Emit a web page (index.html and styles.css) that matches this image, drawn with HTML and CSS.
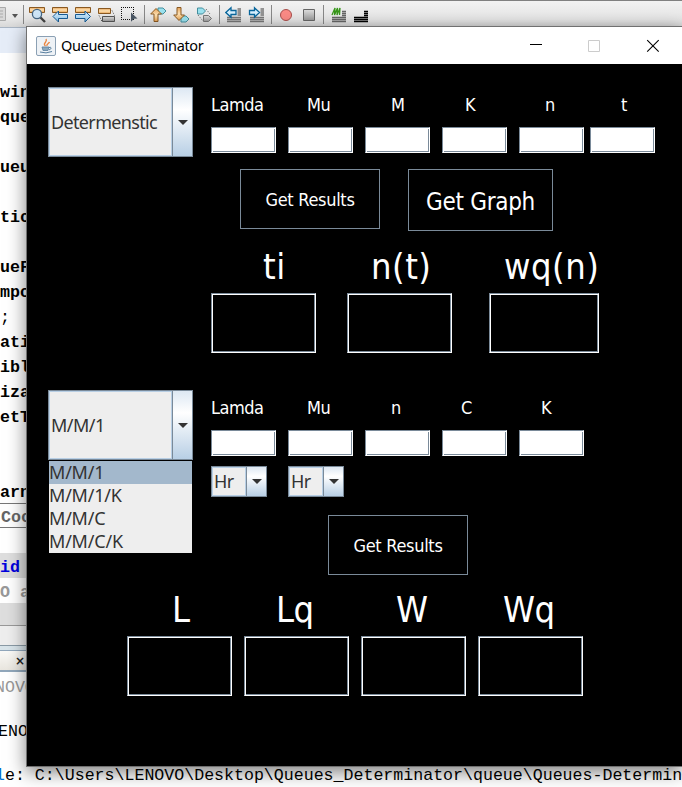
FILE: index.html
```html
<!DOCTYPE html>
<html lang="en">
<head>
<meta charset="utf-8">
<title>Queues Determinator</title>
<link rel="stylesheet" href="styles.css">
</head>
<body>
<svg class="defs" width="0" height="0">
  <defs>
    <linearGradient id="or" x2="0" y2="1"><stop offset="0" stop-color="#e5a45c"/><stop offset=".5" stop-color="#ffe3b5"/><stop offset="1" stop-color="#e8a250"/></linearGradient>
    <linearGradient id="bl" x2="0" y2="1"><stop offset="0" stop-color="#e5f5ff"/><stop offset="1" stop-color="#88c5ef"/></linearGradient>
    <linearGradient id="gr" x2="0" y2="1"><stop offset="0" stop-color="#dedede"/><stop offset="1" stop-color="#999"/></linearGradient>
    <g id="lines"><path d="M12.500 3h3.500M12.500 5h3.500M12.500 7h3.500M12.500 9h3.500M2 11.500h14M2 13.500h14M2 15.500h14" stroke="#777" stroke-width="1.300"/></g>
  </defs>
</svg>
<div class="ide">
  <div class="toolbar">
    <svg class="frag" width="6" height="17"><path d="M-1 1.5h6.5v13H-1" fill="#d8d8d8" stroke="#aaa"/><path d="M0 5h3M0 8h3M0 11h3" stroke="#aaa"/></svg>
    <svg class="caret" width="6" height="4"><path d="M0 0h6L3 4z" fill="#555"/></svg>
    <i class="sep"></i>
    <svg width="17" height="17"><path d="M.5 1.5h15v5H.5z" fill="url(#or)" stroke="#8b5a22"/><path d="M11 11l5 5" stroke="#444" stroke-width="2.4"/><circle cx="8" cy="8" r="4.6" fill="#cfe6f7" stroke="#456785" stroke-width="1.3"/></svg>
    <svg width="17" height="17"><path d="M.5 1.5h15v5H.5z" fill="url(#or)" stroke="#8b5a22"/><path d="M1 10.500l5.500-5.500V8.500H15.500v4H6.500V16z" fill="url(#bl)" stroke="#175d97"/></svg>
    <svg width="17" height="17"><path d="M.5 1.5h15v5H.5z" fill="url(#or)" stroke="#8b5a22"/><path d="M15.500 10.500L10 5v3.500H.5v4H10V16z" fill="url(#bl)" stroke="#175d97"/></svg>
    <svg width="17" height="17"><path d="M.5 2.500h12v5H.5z" fill="url(#or)" stroke="#8b5a22"/><path d="M4.500 10.500h12v5h-12z" fill="url(#gr)" stroke="#555"/><path d="M14 4.500l2.500 5M1 9.500l3 6" stroke="#444" stroke-dasharray="1 1.500"/></svg>
    <svg width="17" height="17"><path d="M0 1.500h13M0 13.500h13" fill="none" stroke="#111" stroke-dasharray="1 1"/><path d="M.5 3v10M12.500 3v10" fill="none" stroke="#111" stroke-dasharray="1 1"/><path d="M10 6.500l6.500 6-3.500.3-3 3z" fill="#4b5866"/></svg>
    <i class="sep"></i>
    <svg width="17" height="17"><path d="M8 2h5l3 3-3 3H8z" fill="#9be2ef" stroke="#45909f"/><path d="M6 2.500L11.500 8H8v7.500H4V8H.7z" fill="url(#or)" stroke="#8b5a22"/></svg>
    <svg width="17" height="17"><path d="M8 10h5l3 3-3 3H8z" fill="#9be2ef" stroke="#45909f"/><path d="M6 14.500L.7 9H4V1.500h4V9h3.500z" fill="url(#or)" stroke="#8b5a22"/></svg>
    <svg width="17" height="17"><path d="M1.500 2h5l3 3-3 3h-5z" fill="#9be2ef" stroke="#45909f"/><path d="M7.500 9.500h5l3 3-3 3h-5z" fill="url(#gr)" stroke="#777"/><path d="M10 3l4 5M2 9l5 6" stroke="#555" stroke-dasharray="1 1.500"/></svg>
    <i class="sep"></i>
    <svg width="17" height="17"><use href="#lines"/><path d="M.8 6.500L6 1.800v2.700h5v4H6v2.700z" fill="#d7f1ff" stroke="#08669c" stroke-width="1.300"/></svg>
    <svg width="17" height="17"><use href="#lines"/><path d="M11.500 6.500L6.500 1.800v2.700h-5v4h5v2.700z" fill="#d7f1ff" stroke="#08669c" stroke-width="1.300"/></svg>
    <i class="sep"></i>
    <svg class="rec" width="13" height="17"><circle cx="6" cy="9" r="5.500" fill="#fb8b86" stroke="#a84f4c"/></svg>
    <svg class="stop" width="13" height="17"><path d="M.5 3.500h11v11H.5z" fill="url(#gr)" stroke="#666"/></svg>
    <i class="sep sep-last"></i>
    <svg class="cm" width="17" height="17"><path d="M11 5.500h4M11 7.500h4M11 9.500h4M1 11.500h14M1 13.500h14M1 15.500h14" stroke="#666" stroke-width="1.300"/><path d="M1 9l3-7-.5 7 3-7-.5 7 3-7-.5 7" fill="none" stroke="#379719" stroke-width="1.300"/></svg>
    <svg class="un" width="17" height="17"><path d="M11 5.500h4M11 7.500h4M11 9.500h4M1 11.500h14M1 13.500h14M1 15.500h14" stroke="#000" stroke-width="1.400"/></svg>
  </div>
  <div class="tabstrip"></div>
  <div class="code">
    <p></p><p>win</p><p>que</p><p></p><p>ueu</p><p></p><p>tic</p><p></p><p>ueF</p><p>mpo</p><p class="plain">;</p><p>ati</p><p>ibl</p><p>iza</p><p>etT</p><p></p><p></p><p>arn</p>
    <p class="fold">Coc</p><p></p><p class="kw">id</p><p class="dim">O a</p>
  </div>
  <div class="gutter"></div>
  <div class="status"></div>
  <div class="outtab"><b>×</b></div>
  <div class="output">
    <p class="grey">NOVO</p><p class="black">ENOVO</p><p class="path"><span class="blue">l</span>e: C:\Users\LENOVO\Desktop\Queues_Determinator\queue\Queues-Determin</p>
  </div>
</div>

<div class="window">
  <div class="titlebar">
    <svg class="java" width="20" height="20"><rect x=".5" y=".5" width="19" height="19" rx="1.500" fill="#eef2f6" stroke="#8ba0b4"/><path d="M9.500 10C6 7.500 12 6 10 3M11 10c-1-2 2-2.500 2.500-4" fill="none" stroke="#e98541" stroke-width="1.400"/><path d="M6 11h7l-1 3.500H7z" fill="#8da8bc" stroke="#587f9f" stroke-width=".8"/><path d="M13 11.500c3-1 2.500 2 0 2.300M4 16q6 2 12-.5" fill="none" stroke="#587f9f"/></svg>
    <span class="title">Queues Determinator</span>
    <svg class="controls" width="132" height="14"><path d="M0 5.500h12" stroke="#000"/><path d="M58.500 1.500h11v11h-11z" fill="none" stroke="#ccc"/><path d="M117.200 1.200l11.500 11.500M128.700 1.200l-11.500 11.500" stroke="#000" stroke-width="1.100"/></svg>
  </div>
  <div class="pane">
    <section class="queue first">
      <div class="chooser">
        <div class="combo big"><span><em class="t-det">Determenstic</em></span><i><svg width="10" height="5"><path d="M0 0h10L5 5z" fill="#333"/></svg></i></div>
      </div>
      <div class="form">
        <div class="labels l6"><span>Lamda</span><span>Mu</span><span>M</span><span>K</span><span>n</span><span>t</span></div>
        <div class="fields f6"><b></b><b></b><b></b><b></b><b></b><b></b></div>
        <div class="buttons"><div class="btn">Get Results</div><div class="btn graph">Get Graph</div></div>
        <div class="heads h3"><span>ti</span><span>n(t)</span><span>wq(n)</span></div>
        <div class="boxes b3"><b></b><b></b><b></b></div>
      </div>
    </section>
    <section class="queue">
      <div class="chooser">
        <div class="combo big"><span><em class="t-mm">M/M/1</em></span><i><svg width="10" height="5"><path d="M0 0h10L5 5z" fill="#333"/></svg></i></div>
        <ul class="popup"><li class="sel">M/M/1</li><li>M/M/1/K</li><li>M/M/C</li><li>M/M/C/K</li></ul>
      </div>
      <div class="form">
        <div class="labels l5"><span>Lamda</span><span>Mu</span><span>n</span><span>C</span><span>K</span></div>
        <div class="fields"><b></b><b></b><b></b><b></b><b></b></div>
        <div class="units">
          <div class="combo small"><span>Hr</span><i><svg width="10" height="5"><path d="M0 0h10L5 5z" fill="#333"/></svg></i></div>
          <div class="combo small"><span>Hr</span><i><svg width="10" height="5"><path d="M0 0h10L5 5z" fill="#333"/></svg></i></div>
        </div>
        <div class="btn second">Get Results</div>
      </div>
    </section>
    <div class="totals">
      <div class="heads h4"><span>L</span><span>Lq</span><span>W</span><span>Wq</span></div>
      <div class="boxes b4"><b></b><b></b><b></b><b></b></div>
    </div>
  </div>
</div>
</body>
</html>
```
FILE: styles.css
```css
* { box-sizing: border-box; }
html { overflow: hidden; }
body { margin: 0; width: 682px; height: 787px; overflow: hidden; position: relative; background: #fff; }
p, ul { margin: 0; padding: 0; }
em { font-style: normal; }
svg { display: block; flex: none; }
.defs { position: absolute; }

/* editor behind the dialog */
.ide { height: 787px; overflow: hidden; }
.toolbar { height: 28px; border-top: 1px solid #808080; border-bottom: 1px solid #a9b5c4; background: linear-gradient(#f2f2f2, #e6e6e6 70%, #d8d8d8); display: flex; align-items: flex-start; padding-top: 5px; gap: 6px; }
.toolbar .caret { margin: 8px -1px 0 0; }
.toolbar .sep { width: 1px; height: 19px; margin-top: -1px; background: #888; flex: none; margin-right: -1px; }
.toolbar .rec { margin-left: 3px; }
.toolbar .stop { margin-left: 4px; }
.toolbar .sep-last { margin-left: 1px; }
.toolbar .cm { margin-left: 2px; }
.toolbar .un { margin-left: -1px; }
.tabstrip { height: 25px; background: #e6edf8; }
.code { height: 550px; padding-top: 2px; font: bold 16.67px/25px "Liberation Mono", monospace; color: #000; }
.code p { height: 25px; width: 40px; line-height: 25px; white-space: pre; }
.code .plain { font-weight: normal; }
.code .fold { height: 25px; margin: -2px 0 2px; border: 1px solid #777; border-left: 0; color: #666; padding-left: 1px; line-height: 27px; }
.code .kw { margin-top: -2px; background: #dedede; color: #00d; line-height: 29px; }
.code .dim { color: #999; line-height: 29px; }
.gutter { height: 22px; background: #dedede; }
.status { height: 21px; border-top: 1px solid #999; border-bottom: 1px solid #8a9aa5; background: #eee; }
.outtab { height: 26px; border-bottom: 2px solid #91a7bb; background: linear-gradient(#d8e4ea 4px, #91a7bb 4px, #91a7bb 5px, #fbfaf7 5px, #e9e6df); padding: 5px 0 0 15px; font: 12px/20px "DejaVu Sans", sans-serif; color: #222; }
.output { height: 115px; font: 16.6px/25px "Liberation Mono", monospace; color: #000; }
.output p { height: 44px; line-height: 31px; white-space: pre; }
.output p:last-child { height: 27px; }
.output .grey { color: #999; text-indent: -5px; }
.output .black { text-indent: -2px; }
.output .path { text-indent: -5px; }
.output .blue { color: #0070d0; }

/* dialog */
.window { position: absolute; left: 26px; top: 26px; width: 656px; height: 741px; border: 1px solid #707070; border-right: 0; background: #000; box-shadow: 0 5px 17px rgba(0,0,0,.5); }
.titlebar { height: 37px; width: 655px; background: #fff; display: flex; align-items: center; padding-left: 9px; }
.java { margin-right: 5px; }
.title { font: 14.500px/20px "Noto Sans", sans-serif; letter-spacing: -.34px; width: 469px; color: #000; white-space: nowrap; padding-bottom: 2px; }
.pane { width: 655px; height: 702px; color: #fff; font: 18px/22px "DejaVu Sans Condensed", "DejaVu Sans", sans-serif; padding: 23px 0 0 21px; }
.queue { display: flex; gap: 18px; align-items: flex-start; height: 209px; }
.queue.first { height: 303px; }
.chooser { width: 145px; }
.combo { border: 1px solid #7a8a99; display: flex; color: #333; background: #eee; font: 18px/22px "Noto Sans", sans-serif; }
.combo > span { flex: 1; border: 1px solid #b8cfe5; display: flex; align-items: center; padding: 0 0 1px 1px; overflow: hidden; letter-spacing: -.5px; }
.combo .t-mm { letter-spacing: -.5px; }
.combo .t-det { letter-spacing: -.65px; }
.combo > i { width: 20px; border-left: 1px solid #7a8a99; background: linear-gradient(#dde8f3, #fff 32%, #b8cfe5); display: flex; align-items: center; justify-content: center; }
.big { width: 145px; height: 70px; }
.small { width: 56px; height: 31px; }
.popup { list-style: none; margin: 1px 1px 0; color: #333; background: #eee; font: 18px/22px "Noto Sans", sans-serif; letter-spacing: -.2px; height: 92px; }
.popup li { height: 23px; }
.popup .sel { background: #a3b8cc; }
.form { width: 444px; }
.labels { display: grid; height: 40px; padding-top: 7px; letter-spacing: -.5px; }
.l6 { grid-template-columns: 96px 84px 74px 80px 76px 34px; }
.l5 { grid-template-columns: 96px 84px 70px 80px 80px; }
.fields { display: flex; gap: 12px; height: 26px; }
.fields b { width: 65px; height: 26px; background: #fff; }
.fields b, .boxes b { display: block; border: 1px solid #7a8a99; border-right-color: #fff; border-bottom-color: #fff; box-shadow: inset 1px 1px #fff, inset -1px -1px #7a8a99; }
.f6 b:last-child { margin-left: -6px; }
.buttons { display: flex; gap: 28px; align-items: flex-start; margin: 16px 0 0 29px; height: 78px; }
.btn { width: 140px; height: 60px; border: 1px solid #7a8a99; display: flex; align-items: center; justify-content: center; letter-spacing: -.3px; white-space: nowrap; padding-top: 1px; }
.btn.graph { width: 145px; height: 62px; font-size: 24px; padding-top: 3px; }
.second { margin: 18px 0 0 117px; }
.units { display: flex; gap: 21px; margin-top: 10px; }
.heads { display: grid; font-size: 36px; line-height: 40px; height: 46px; letter-spacing: .5px; }
.h3 { grid-template-columns: 108px 133px 110px; padding-left: 52px; }
.h4 { grid-template-columns: 104px 120px 107px 60px; padding-left: 45px; letter-spacing: -.5px; }
.boxes { display: flex; height: 60px; }
.boxes b { width: 105px; height: 60px; }
.b3 { gap: 31px; }
.b3 b:last-child { width: 110px; margin-left: 6px; }
.b4 { gap: 12px; }
.totals { margin: -9px 0 0 79px; }
```
